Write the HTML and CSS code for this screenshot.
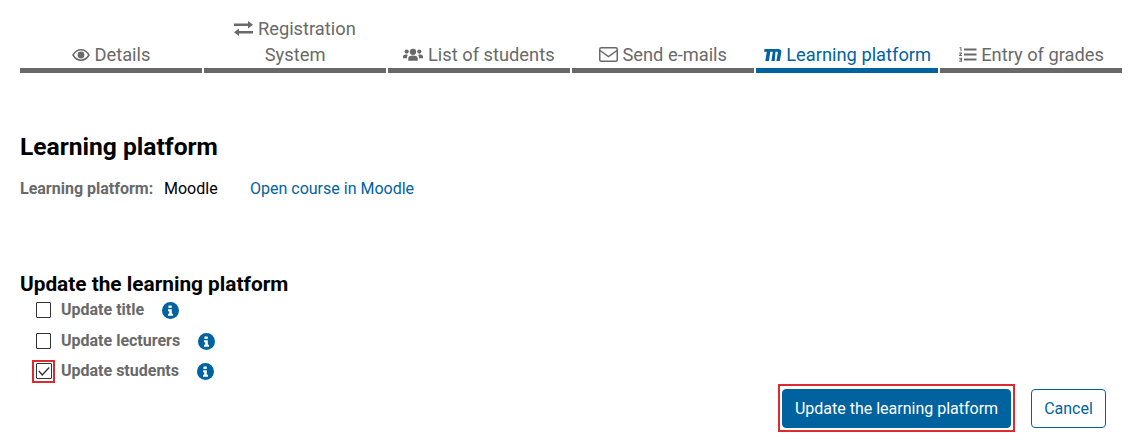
FILE: index.html
```html
<!DOCTYPE html>
<html lang="en">
<head>
    <meta charset="UTF-8">
    <title>Learning platform</title>
    <link rel="stylesheet" href="styles.css">
</head>
<body>
    <nav class="tabs">
        <a href="#" class="tab">
            <svg class="tab-icon" width="18" height="14" viewBox="0 0 18 14"><path d="M1 7C3 3.600 5.800 1.800 9 1.800S15 3.600 17 7c-2 3.400-4.800 5.200-8 5.200S3 10.400 1 7z" fill="none" stroke="currentColor" stroke-width="1.500"/><circle cx="9" cy="7" r="3.400" fill="currentColor"/></svg>
            Details
        </a>
        <a href="#" class="tab">
            <svg class="tab-icon" width="19" height="15" viewBox="0 0 19 15"><path d="M0 2.500h14V0l5 3.750-5 3.750V5H0zM19 10H5V7.500L0 11.250 5 15v-2.500h14z" fill="currentColor"/></svg>
            Registration<br>System
        </a>
        <a href="#" class="tab">
            <svg class="tab-icon" width="20" height="14" viewBox="0 0 19 13"><circle cx="9.500" cy="3.500" r="3" fill="currentColor"/><circle cx="3.500" cy="3.200" r="2" fill="currentColor"/><circle cx="15.500" cy="3.200" r="2" fill="currentColor"/><path d="M5 12V9.500C5 7.800 6.500 7 9.500 7S14 7.800 14 9.500V12zM0 9.500V8c0-1.400 1.200-2 3.800-2L4.500 7C3.800 7.700 3.800 8.500 3.800 9.500zM19 9.500V8c0-1.400-1.200-2-3.800-2L14.500 7c.7.700.7 1.500.7 2.500z" fill="currentColor"/></svg>
            List of students
        </a>
        <a href="#" class="tab">
            <svg class="tab-icon" width="19" height="15" viewBox="0 0 19 15"><rect x=".75" y=".75" width="17.500" height="13.500" rx="1.500" fill="none" stroke="currentColor" stroke-width="1.500"/><path d="M1 3.500L9.500 9.500 18 3.500" fill="none" stroke="currentColor" stroke-width="1.500"/></svg>
            Send e-mails
        </a>
        <a href="#" class="tab tab-active">
            <svg class="tab-icon" width="19" height="14" viewBox="0 0 18 14"><path d="M1 1h13.500c2.500 0 3.700 1.300 3.300 3.500L16.300 13h-3.400l1.400-8.200c.1-.7-.2-1-1-1h-1.300L11.200 13H7.900l1.400-9.200H6.800L5.400 13H1.800L3.300 3.800H.6z" fill="currentColor"/></svg>
            Learning platform
        </a>
        <a href="#" class="tab">
            <svg class="tab-icon" width="19" height="15" viewBox="0 0 18 15"><path d="M5.500 1.500H18v2H5.500zM5.500 6.500H18v2H5.500zM5.500 11.500H18v2H5.500z" fill="currentColor"/><path d="M1 .3h2v4H2V1.300H1zM.6 5.500h2.900v1L2 8h1.500v1H.6V8l1.700-1.500H.6zM.6 10.800h2.900v4H.6v-1h1.900v-.5H1.200v-1h1.300v-.5H.6z" fill="currentColor"/></svg>
            Entry of grades
        </a>
    </nav>

    <main>
        <h1 class="page-title">Learning platform</h1>
        <div class="info-row">
            <span class="info-label">Learning platform:</span>
            <span class="info-value">Moodle</span>
            <a href="#" class="info-link">Open course in Moodle</a>
        </div>

        <h2 class="update-title">Update the learning platform</h2>
        <div class="options">
            <label class="option">
                <span class="check-wrap"><span class="check"></span></span>
                <span class="option-text">Update title</span>
                <svg class="info-icon" width="17" height="17" viewBox="0 0 17 17"><circle cx="8.500" cy="8.500" r="8.500" fill="#00629f"/><path d="M6.500 3.500h3.200v2.600H6.500zM6 7.200h3.800v4.600h1.200v2H6v-2h1.200V9.200H6z" fill="#fff"/></svg>
            </label>
            <label class="option">
                <span class="check-wrap"><span class="check"></span></span>
                <span class="option-text">Update lecturers</span>
                <svg class="info-icon" width="17" height="17" viewBox="0 0 17 17"><circle cx="8.500" cy="8.500" r="8.500" fill="#00629f"/><path d="M6.500 3.500h3.200v2.600H6.500zM6 7.200h3.800v4.600h1.200v2H6v-2h1.200V9.200H6z" fill="#fff"/></svg>
            </label>
            <label class="option">
                <span class="check-wrap check-focus"><span class="check">
                    <svg width="14" height="14" viewBox="0 0 14 14"><path d="M2.500 7l3 3.500L11.500 4" fill="none" stroke="#333" stroke-width="1.200"/></svg>
                </span></span>
                <span class="option-text">Update students</span>
                <svg class="info-icon" width="17" height="17" viewBox="0 0 17 17"><circle cx="8.500" cy="8.500" r="8.500" fill="#00629f"/><path d="M6.500 3.500h3.200v2.600H6.500zM6 7.200h3.800v4.600h1.200v2H6v-2h1.200V9.200H6z" fill="#fff"/></svg>
            </label>
        </div>

        <div class="actions">
            <span class="btn-focus"><button class="btn btn-primary">Update the learning platform</button></span>
            <button class="btn btn-cancel">Cancel</button>
        </div>
    </main>
</body>
</html>
```

FILE: styles.css
```css
body {
    margin: 0;
    padding: 0 10px 0 20px;
    font-family: Roboto, "Liberation Sans", sans-serif;
    background-color: #fff;
    color: #000;
}
.tabs {
    display: grid;
    grid-template-columns: repeat(6, 1fr);
    column-gap: 1.600px;
    align-items: end;
    padding-top: 16px;
}
.tab {
    display: block;
    border-bottom: 5px solid #696969;
    color: #696969;
    font-size: 18.300px;
    line-height: 26px;
    text-align: center;
    text-decoration: none;
}
.tab-active {
    border-bottom-color: #00629f;
    color: #00629f;
}
.tab-icon {
    vertical-align: -1px;
}
.page-title {
    margin: 58px 0 0;
    font-size: 24.600px;
    line-height: 32px;
    font-weight: 700;
}
.info-row {
    display: flex;
    align-items: baseline;
    margin-top: 16px;
    font-size: 16px;
    line-height: 20px;
}
.info-label {
    width: 144px;
    color: #696969;
    font-weight: 700;
}
.info-value {
    width: 86px;
}
.info-link {
    color: #00629f;
    text-decoration: none;
}
.update-title {
    margin: 72px 0 0;
    font-size: 20.800px;
    line-height: 26px;
    font-weight: 700;
}
.options {
    display: flex;
    flex-direction: column;
    gap: 9px;
    margin-top: 3px;
    padding-left: 12px;
}
.option {
    display: flex;
    align-items: center;
    height: 21px;
}
.option:first-child {
    margin-bottom: 1px;
}
.check-wrap {
    display: flex;
    box-sizing: border-box;
    width: 23px;
    height: 23px;
    padding: 2px 3px;
    border: 1px solid transparent;
}
.check-focus {
    border: 2px solid #dc2a30;
    padding: 1px 2px;
}
.check {
    display: block;
    box-sizing: border-box;
    width: 16px;
    height: 16px;
    border: 1px solid #333;
    border-radius: 1px;
}
.check svg {
    display: block;
    margin: -1px;
    width: 16px;
    height: 16px;
}
.option-text {
    margin-left: 6px;
    color: #696969;
    font-size: 16px;
    font-weight: 700;
    position: relative;
    top: -1px;
}
.info-icon {
    margin-left: 18px;
}
.actions {
    display: flex;
    justify-content: flex-end;
    align-items: flex-start;
    gap: 16px;
    margin-top: 2px;
    padding-right: 16px;
}
.btn-focus {
    display: block;
    padding: 3px 2px 2px;
    border: 2px solid #dc2a30;
}
.btn {
    display: block;
    height: 39px;
    border-radius: 4px;
    font-family: Roboto, "Liberation Sans", sans-serif;
    font-size: 16px;
}
.btn-primary {
    width: 229px;
    border: 1px solid #00629f;
    background-color: #00629f;
    color: #fff;
}
.btn-cancel {
    width: 75px;
    margin-top: 5px;
    border: 1px solid #00629f;
    background-color: #fff;
    color: #00629f;
}
```
